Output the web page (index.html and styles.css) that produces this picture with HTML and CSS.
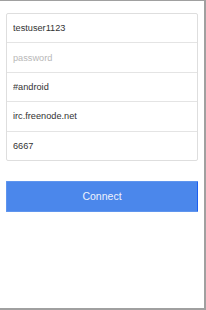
FILE: index.html
```html
<!DOCTYPE html>
<html>
<head>
    <title>Connect</title>
    <link rel="stylesheet" href="styles.css">
</head>
<body>
    <div class="screen">
        <div class="fields">
            <input class="field" type="text" value="testuser1123">
            <input class="field" type="password" placeholder="password">
            <input class="field" type="text" value="#android">
            <input class="field" type="text" value="irc.freenode.net">
            <input class="field" type="text" value="6667">
        </div>

        <button class="connect-btn">Connect</button>
    </div>
</body>
</html>
```

FILE: styles.css
```css
html, body {
    margin: 0;
    padding: 0;
    background-color: #fff;
}

.screen {
    box-sizing: border-box;
    width: 206px;
    height: 310px;
    padding: 12px 6px 0 6px;
    border-top: 1px solid #a0a0a0;
    border-right: 2px solid #a0a0a0;
    border-bottom: 2px solid #a0a0a0;
    font-family: "Liberation Sans", Arial, sans-serif;
}

.fields {
    display: flex;
    flex-direction: column;
    border: 1px solid #dedede;
    border-radius: 2px;
}

.field {
    box-sizing: border-box;
    height: 29.4px;
    margin: 0;
    padding: 0 6px;
    border: none;
    border-top: 1px solid #e4e4e4;
    background: transparent;
    font-family: "Liberation Sans", Arial, sans-serif;
    font-size: 9.2px;
    color: #333;
    outline: none;
}

.field:first-child {
    border-top: none;
    height: 28.4px;
}

.field::placeholder {
    color: #b8b8b8;
}

.connect-btn {
    display: block;
    box-sizing: border-box;
    width: 100%;
    height: 31px;
    margin-top: 20px;
    padding: 0;
    background-color: #4b87eb;
    color: #eef3fd;
    border: 1px solid #5f95ee;
    border-right-color: #1c5ff0;
    border-radius: 1px;
    font-family: "Liberation Sans", Arial, sans-serif;
    font-size: 10.5px;
    cursor: pointer;
}
```
